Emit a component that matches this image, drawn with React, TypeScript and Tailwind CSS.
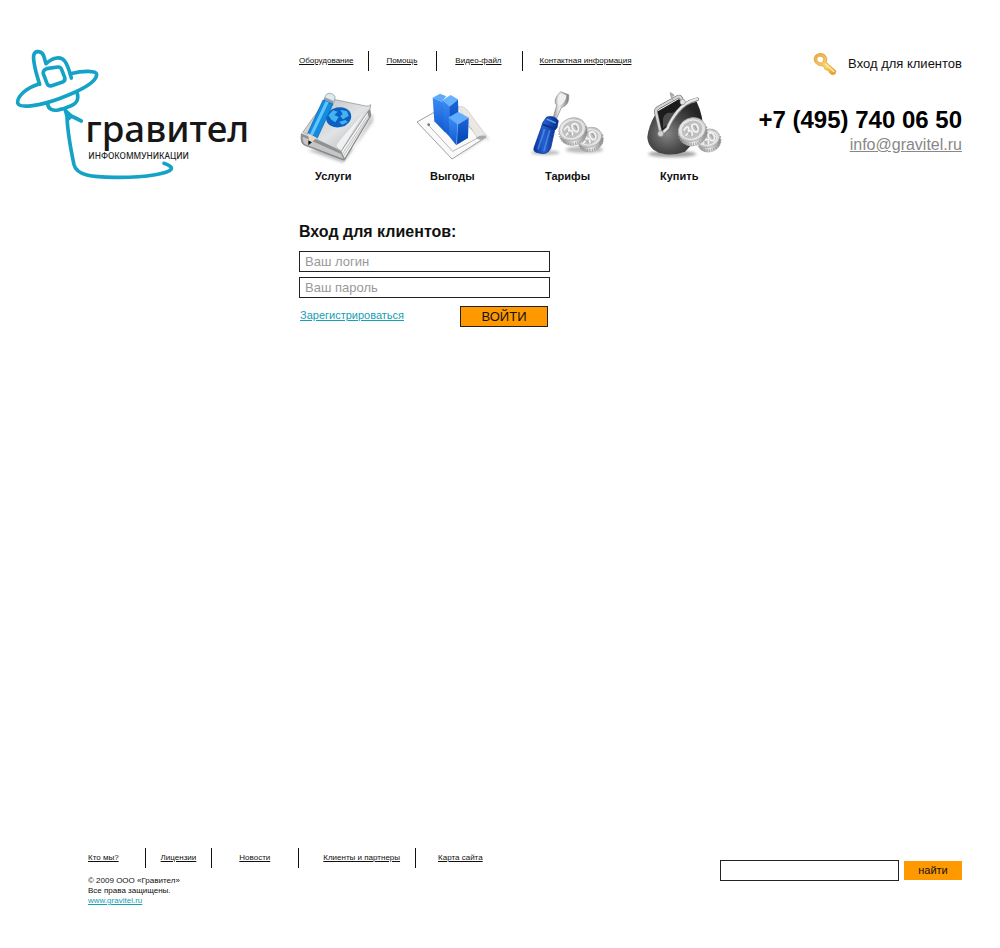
import React from "react";

function Logo() {
  return (
    <svg viewBox="0 0 780 450" className="h-[150px] w-[260px]" role="img" aria-label="Гравител Инфокоммуникации">
      <g fill="none" stroke="#14a3c7" strokeWidth="11" strokeLinecap="round" strokeLinejoin="round">
        <path d="M119 133C109 102 99 67 101 46C105 29 125 33 131 47L138 71C162 49 184 50 194 63C205 78 208 94 214 114" />
        <path d="M140 86L173 81Q182 80 185 89L194 112Q197 122 188 126L155 137Q145 140 141 130L131 104Q126 91 140 86Z" />
        <path d="M117 132C76 145 51 170 53 189C59 208 125 195 177 176C240 153 289 127 290 104C290 91 250 92 211 101" />
        <path d="M143 192C145 208 158 214 178 209C191 207 195 206 206 200C227 193 239 182 231 157" />
        <path d="M196 211L201 228C202 275 214 336 222 374C230 407 276 411 345 412C436 413 519 400 514 383C511 376 501 373 492 370" />
        <path d="M201 216L214 228L205 237M214 228L244 243" />
      </g>
      <text x="256" y="306" fontFamily="Noto Sans, Open Sans, sans-serif" fontWeight="500" fontSize="110" fill="#171717">гравител</text>
      <text x="265" y="356" fontFamily="Noto Sans, Open Sans, sans-serif" fontWeight="500" fontSize="25" fill="#222">ИНФОКОММУНИКАЦИИ</text>
    </svg>
  );
}

function Defs() {
  return (
    <svg className="absolute h-0 w-0" aria-hidden="true">
      <defs>
        <linearGradient id="silver" x1="0" y1="0" x2="1" y2="1">
          <stop offset="0" stopColor="#b5b7b8" /><stop offset=".55" stopColor="#e2e3e4" /><stop offset="1" stopColor="#a7a9aa" />
        </linearGradient>
        <linearGradient id="coin" x1="0" y1="0" x2="1" y2="1">
          <stop offset="0" stopColor="#fafafa" /><stop offset=".5" stopColor="#c4c4c4" /><stop offset="1" stopColor="#f1f1f1" />
        </linearGradient>
        <linearGradient id="edge" x1="0" y1="0" x2="1" y2="0">
          <stop offset="0" stopColor="#8c8c8c" /><stop offset=".4" stopColor="#eee" /><stop offset="1" stopColor="#777" />
        </linearGradient>
        <linearGradient id="face" x1="0" y1="0" x2="0" y2="1">
          <stop offset="0" stopColor="#3c8cf5" /><stop offset="1" stopColor="#1058cf" />
        </linearGradient>
        <linearGradient id="side" x1="0" y1="0" x2="0" y2="1">
          <stop offset="0" stopColor="#1b66da" /><stop offset="1" stopColor="#0441ae" />
        </linearGradient>
        <linearGradient id="handle" x1="0" y1="0" x2="1" y2="0">
          <stop offset="0" stopColor="#06349b" /><stop offset=".4" stopColor="#2560d0" /><stop offset="1" stopColor="#052b88" />
        </linearGradient>
        <radialGradient id="leather" cx=".35" cy=".6" r=".65">
          <stop offset="0" stopColor="#858585" /><stop offset=".5" stopColor="#4c4c4c" /><stop offset="1" stopColor="#242424" />
        </radialGradient>
        <linearGradient id="gold" x1="0" y1="0" x2="1" y2="1">
          <stop offset="0" stopColor="#eda83b" /><stop offset=".6" stopColor="#fbd36a" /><stop offset="1" stopColor="#e58d1c" />
        </linearGradient>
        <filter id="soft" x="-30%" y="-50%" width="160%" height="200%"><feGaussianBlur stdDeviation="5" /></filter>
      </defs>
    </svg>
  );
}

function BookIcon() {
  return (
    <svg viewBox="27 0 240 240" className="size-20" aria-hidden="true">
      <path d="M50 195L160 233L248 110L250 85L190 190Z" fill="#777" opacity=".5" filter="url(#soft)" />
      <path d="M34 146L155 197L239 70L243 92L163 226L44 181Q30 175 34 146Z" fill="#8f9192" stroke="#777" strokeWidth="2" />
      <path d="M154 199L232 82L236 98L164 219Z" fill="#f3f3f3" />
      <path d="M157 207L234 91M160 214L235 98" stroke="#a5a5a5" strokeWidth="2" />
      <path d="M38 142L112 39L227 63Q237 65 242 59Q243 72 234 79L153 199Z" fill="url(#silver)" stroke="#8a8c8d" strokeWidth="2" />
      <path d="M139 183C150 160 190 125 223 81L153 197Z" fill="#fff" opacity=".7" />
      <path d="M38 155L153 207L160 221L46 178Q38 173 38 155Z" fill="#c4c6c7" />
      <ellipse cx="146" cy="97" rx="38" ry="30" transform="rotate(-12 146 97)" fill="#0961c6" />
      <path d="M115 91L129 76L143 80L133 90L146 96L136 112L124 104ZM151 74L171 79L176 92L159 103L151 94L158 87ZM147 111L166 105L173 111L157 119Z" fill="#46b3f1" />
      <path d="M106 34Q111 20 128 27Q139 33 134 45L128 57L101 47Z" fill="#dfe9ef" stroke="#778f9e" strokeWidth="2" />
      <path d="M104 37L131 48L127 58L100 48Z" fill="#8aa2b0" />
      <path d="M99 45L129 57L82 159L53 145Z" fill="#158be0" stroke="#0865af" strokeWidth="2" />
      <path d="M107 49L116 52L68 152L60 148Z" fill="#61c6ff" />
      <path d="M54 145L80 158L58 178Z" fill="#e8d8c4" /><path d="M55 166L66 172L55 181Z" fill="#181818" />
    </svg>
  );
}

function BlocksIcon() {
  return (
    <svg viewBox="27 0 240 240" className="size-20" aria-hidden="true">
      <path d="M145 223L240 160Q256 168 251 162L237 147Z" fill="#777" opacity=".45" filter="url(#soft)" />
      <path d="M36 111L128 59L243 156L141 222Z" fill="#fafafa" stroke="#a0a0a0" strokeWidth="3" />
      <path d="M70 120L143 199L222 157L164 96" fill="none" stroke="#b5b5b5" strokeWidth="3" />
      <path d="M159 65Q178 62 190 79L243 151L217 159Z" fill="#ebe8e4" stroke="#c5c5c5" strokeWidth="2" />
      <path d="M212 159Q232 146 243 156Q231 168 220 163" fill="#a5abac" />
      <circle cx="71" cy="119" r="4" fill="#777" />
      <path d="M83 38L120 54V142L88 109Z" fill="url(#face)" />
      <path d="M83 38L105 26L124 34L113 46L117 55Z" fill="#5faafa" />
      <path d="M113 45L136 64L137 158L117 138Z" fill="url(#face)" />
      <path d="M113 45L137 30L159 43L134 64Z" fill="#67b2ff" />
      <path d="M134 64L159 43L161 110L136 158Z" fill="url(#side)" />
      <path d="M131 97L158 118L154 181L134 156Z" fill="url(#face)" />
      <path d="M131 97L160 80L191 98L158 118Z" fill="#61adff" />
      <path d="M158 118L191 98L189 159L154 180Z" fill="url(#side)" />
      <path d="M113 45L134 64L159 43M131 97L158 118L191 98M158 118L155 178" fill="none" stroke="#72b9ff" strokeWidth="2" opacity=".8" />
    </svg>
  );
}

function Coin({ x, y, rx, ry }: { x: number; y: number; rx: number; ry: number }) {
  return (
    <g transform={`translate(${x} ${y}) rotate(-22)`}>
      <ellipse cx="-1" cy="14" rx={rx} ry={ry} fill="url(#edge)" stroke="#999" strokeWidth="1" />
      <ellipse cx="-1" cy="9" rx={rx} ry={ry} fill="none" stroke="#a0a0a0" strokeWidth="8" strokeDasharray="3 4" />
      <ellipse rx={rx} ry={ry} fill="url(#coin)" stroke="#a5a5a5" strokeWidth="2" />
      <ellipse rx={rx - 8} ry={ry - 7} fill="#c0c0c0" stroke="#eee" strokeWidth="3" />
      <path d="M-22 -8Q-4 -20 -9 -3Q-14 6 -23 9M-13 0Q4 0 -6 15M5 -13Q22 -16 19 2Q13 18 5 8Q-1 -5 5 -13" fill="none" stroke="#f4f4f4" strokeWidth="5" strokeLinecap="round" />
      <path d="M-17 -2L-9 14M11 -8L14 6" stroke="#8c8c8c" strokeWidth="2" />
    </g>
  );
}

function ToolsIcon() {
  return (
    <svg viewBox="27 0 240 240" className="size-20" aria-hidden="true">
      <ellipse cx="76" cy="203" rx="42" ry="7" fill="#777" opacity=".5" filter="url(#soft)" />
      <ellipse cx="193" cy="194" rx="56" ry="10" fill="#777" opacity=".5" filter="url(#soft)" />
      <Coin x={209} y={157} rx={37} ry={29} />
      <Coin x={157} y={133} rx={41} ry={34} />
      <path d="M98 103L110 61Q96 46 122 20L146 29Q150 60 124 68L108 105Z" fill="url(#edge)" stroke="#888" strokeWidth="2" />
      <path d="M122 25L139 31Q139 48 124 59L116 60Q107 47 122 25Z" fill="#f0f0f0" />
      <path d="M80 96Q101 90 115 107L111 128L104 136L92 190Q82 211 58 204Q38 202 42 188L64 127L68 113Z" fill="url(#handle)" stroke="#052d82" strokeWidth="2" />
      <path d="M74 132L54 193M89 136L72 198" stroke="#5794ee" strokeWidth="5" opacity=".7" />
      <path d="M69 119L107 132" stroke="#0a3392" strokeWidth="6" />
      <path d="M80 102L107 114" stroke="#5c95ee" strokeWidth="5" />
    </svg>
  );
}

function PurseIcon() {
  return (
    <svg viewBox="27 0 240 240" className="size-20" aria-hidden="true">
      <ellipse cx="112" cy="207" rx="72" ry="10" fill="#555" opacity=".55" filter="url(#soft)" />
      <path d="M59 92Q41 122 37 156Q39 193 78 205Q112 214 150 200L206 140Q204 90 185 50L140 62Z" fill="url(#leather)" />
      <path d="M66 80L132 42L148 62L100 128L77 140Z" fill="#1c1c1c" />
      <path d="M84 101Q89 80 112 84Q127 75 132 76L103 113L84 130Z" fill="#4b4b4b" />
      <path d="M77 145L63 82Q61 72 72 67L127 36Q137 30 142 49" fill="none" stroke="#6c6c6c" strokeWidth="11" strokeLinejoin="round" />
      <path d="M77 145L63 82Q61 72 72 67L127 36Q137 30 142 49" fill="none" stroke="#d5d5d5" strokeWidth="7" />
      <path d="M77 150L98 130Q106 108 128 80Q150 52 186 43" fill="none" stroke="#777" strokeWidth="12" strokeLinecap="round" />
      <path d="M77 149L98 129Q106 107 128 79Q150 51 186 42" fill="none" stroke="#e6e6e6" strokeWidth="7" strokeLinecap="round" />
      <path d="M112 43L107 25M107 25L115 31" fill="none" stroke="#aaa" strokeWidth="6" strokeLinecap="round" />
      <circle cx="77" cy="146" r="9" fill="#d1d1d1" stroke="#777" strokeWidth="2" />
      <circle cx="143" cy="51" r="8" fill="#e4e4e4" stroke="#888" strokeWidth="2" />
      <Coin x={220} y={160} rx={34} ry={27} />
      <Coin x={171} y={134} rx={42} ry={35} />
    </svg>
  );
}

function KeyIcon() {
  return (
    <svg viewBox="218 36 72 72" className="size-6" aria-hidden="true">
      <path d="M226 45Q238 36 252 43Q264 52 258 67L287 93L284 102L275 104L267 98L264 91L255 89L249 78Q233 79 224 67Q217 56 226 45ZM231 52Q226 61 235 67Q243 72 249 64Q253 55 245 50Q238 46 231 52Z" fill="url(#gold)" fillRule="evenodd" stroke="#d99a3c" strokeWidth="2" />
      <path d="M254 71L282 96" stroke="#fff0a9" strokeWidth="4" />
    </svg>
  );
}

type NavItem = { label: string; style: string };

const topNav: NavItem[] = [
  { label: "Оборудование", style: "pr-[15px]" },
  { label: "Помощь", style: "border-l pl-[17px] pr-[19px]" },
  { label: "Видео-файл", style: "border-l pl-[18px] pr-5" },
  { label: "Контактная информация", style: "border-l pl-[17px]" },
];

const footerNav: NavItem[] = [
  { label: "Кто мы?", style: "pr-[26px]" },
  { label: "Лицензии", style: "border-l pl-[15px] pr-[15px]" },
  { label: "Новости", style: "border-l pl-[27px] pr-[28px]" },
  { label: "Клиенты и партнеры", style: "border-l pl-6 pr-[15px]" },
  { label: "Карта сайта", style: "border-l pl-[22px]" },
];

function LinkBar({ items, label }: { items: NavItem[]; label: string }) {
  return (
    <nav aria-label={label}>
      <ul className="flex text-[8px] leading-5">
        {items.map((item) => (
          <li key={item.label} className={`h-5 whitespace-nowrap border-[#111] ${item.style}`}>
            <a href="#" className="underline">{item.label}</a>
          </li>
        ))}
      </ul>
    </nav>
  );
}

const sections = [
  { label: "Услуги", Icon: BookIcon },
  { label: "Выгоды", Icon: BlocksIcon },
  { label: "Тарифы", Icon: ToolsIcon },
  { label: "Купить", Icon: PurseIcon },
];

export default function App() {
  return (
    <div className="flex min-h-screen flex-col bg-white font-['Liberation_Sans',Arial,sans-serif] text-[#111]">
      <Defs />
      <header className="flex pr-[38px] pt-10">
        <a href="#" className="w-[299px] shrink-0"><Logo /></a>
        <div className="pt-[11px]">
          <LinkBar items={topNav} label="Разделы" />
          <ul className="mt-[14px] flex gap-[35px]">
            {sections.map(({ label, Icon }) => (
              <li key={label}>
                <a href="#" className="block w-20 text-[11px] leading-[22px] font-bold">
                  <Icon />
                  <span className="block pl-4">{label}</span>
                </a>
              </li>
            ))}
          </ul>
        </div>
        <div className="ml-auto flex shrink-0 flex-col items-end pt-[11px]">
          <a href="#" className="flex items-center gap-[11px] text-[13px] leading-[26px]"><KeyIcon />Вход для клиентов</a>
          <p className="mt-7 text-2xl leading-[30px] font-bold whitespace-nowrap text-black">+7 (495) 740 06 50</p>
          <a href="mailto:info@gravitel.ru" className="text-base leading-5 text-[#888] underline">info@gravitel.ru</a>
        </div>
      </header>

      <main className="flex-1 pt-[30px] pl-[299px]">
        <form className="w-[251px]" onSubmit={(e) => e.preventDefault()}>
          <h1 className="text-base leading-6 font-bold">Вход для клиентов:</h1>
          <div className="mt-[7px] flex flex-col gap-[5px]">
            <input type="text" aria-label="Ваш логин" placeholder="Ваш логин" className="h-[21px] w-full border border-[#222] px-[5px] pb-px text-[13px] leading-4 outline-none placeholder:text-[#999]" />
            <input type="password" aria-label="Ваш пароль" placeholder="Ваш пароль" className="h-[21px] w-full border border-[#222] px-[5px] pb-px text-[13px] leading-4 outline-none placeholder:text-[#999]" />
          </div>
          <div className="mt-2 flex items-start justify-between pr-0.5 pl-px">
            <a href="#" className="text-[11px] leading-[18px] text-[#14a0b5] underline">Зарегистрироваться</a>
            <button type="submit" className="h-[21px] w-[88px] border border-[#222] bg-[#ff9900] text-[13px] leading-[19px]">ВОЙТИ</button>
          </div>
        </form>
      </main>

      <footer className="flex items-start justify-between pr-[38px] pb-[42px] pl-[88px]">
        <div>
          <LinkBar items={footerNav} label="О компании" />
          <div className="mt-2 text-[8px] leading-[10px]">
            <p>© 2009 ООО «Гравител»</p>
            <p>Все права защищены.</p>
            <a href="#" className="block text-[#14a0b5] underline">www.gravitel.ru</a>
          </div>
        </div>
        <form className="flex items-center gap-[5px] pt-3" onSubmit={(e) => e.preventDefault()}>
          <input type="search" aria-label="Поиск" className="h-[21px] w-[179px] border border-[#222] px-[5px] text-[13px] outline-none" />
          <button type="submit" className="h-[19px] w-[58px] bg-[#ff9900] text-[11px] leading-[19px]">найти</button>
        </form>
      </footer>
    </div>
  );
}
